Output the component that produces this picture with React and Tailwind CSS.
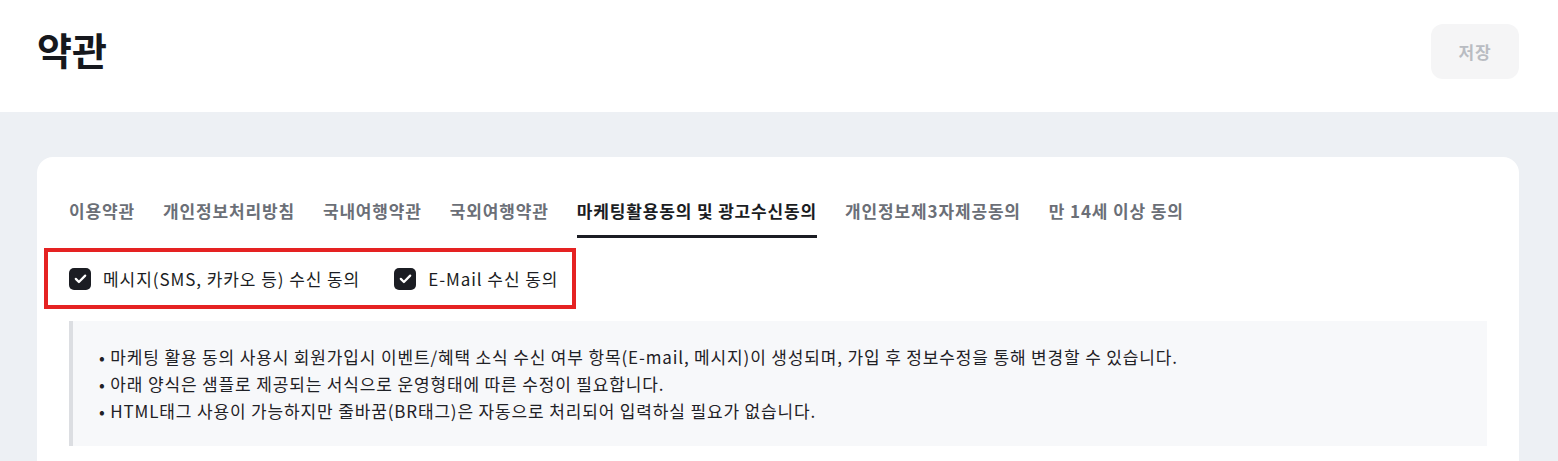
import React, { useState } from 'react';

const tabs = [
  '이용약관',
  '개인정보처리방침',
  '국내여행약관',
  '국외여행약관',
  '마케팅활용동의 및 광고수신동의',
  '개인정보제3자제공동의',
  '만 14세 이상 동의',
];

const notes = [
  '마케팅 활용 동의 사용시 회원가입시 이벤트/혜택 소식 수신 여부 항목(E-mail, 메시지)이 생성되며, 가입 후 정보수정을 통해 변경할 수 있습니다.',
  '아래 양식은 샘플로 제공되는 서식으로 운영형태에 따른 수정이 필요합니다.',
  'HTML태그 사용이 가능하지만 줄바꿈(BR태그)은 자동으로 처리되어 입력하실 필요가 없습니다.',
];

function Check({ checked, onClick, label }) {
  return (
    <button onClick={onClick} className="flex items-center gap-[12px]">
      <span
        className={
          checked
            ? 'flex h-[22px] w-[22px] items-center justify-center rounded-[5px] bg-[#1b1d23]'
            : 'flex h-[22px] w-[22px] items-center justify-center rounded-[5px] border-2 border-[#c9ccd1] bg-white'
        }
      >
        {checked && (
          <svg viewBox="0 0 16 16" className="h-[15px] w-[15px]" fill="none">
            <path d="M3 8.4l3.3 3.3L13 4.9" stroke="#fff" strokeWidth="2.4" strokeLinecap="round" strokeLinejoin="round" />
          </svg>
        )}
      </span>
      <span className="text-[17px] tracking-[0.055em] text-[#1b1d23]">{label}</span>
    </button>
  );
}

export default function App() {
  const [active, setActive] = useState(4);
  const [sms, setSms] = useState(true);
  const [mail, setMail] = useState(true);

  return (
    <div className="min-h-[461px] bg-[#edf0f4] font-['Noto_Sans_CJK_KR','Noto_Sans',sans-serif]">
      {/* HEADER */}
      <div className="flex h-[112px] items-start justify-between bg-white pl-[37px] pr-[39px]">
        <h1 className="mt-[23px] text-[38px] font-bold leading-[52px] text-[#16181d]">약관</h1>
        <button className="mt-[24px] h-[55px] w-[88px] rounded-xl bg-[#f5f5f6] text-[17px] font-bold tracking-[0.045em] text-[#b9bcc2]">
          저장
        </button>
      </div>

      {/* CARD */}
      <div className="pl-[37px] pr-[39px] pt-[45px]">
        <div className="rounded-t-2xl bg-white px-[32px] pt-[42px] pb-6">
          {/* TABS */}
          <div className="flex gap-[28px]">
            {tabs.map((t, i) => (
              <button
                key={t}
                onClick={() => setActive(i)}
                className={
                  i === active
                    ? 'border-b-[3px] border-[#1b1d23] pb-[12px] text-[17px] font-bold leading-6 tracking-[0.05em] text-[#1b1d23]'
                    : 'border-b-[3px] border-transparent pb-[12px] text-[17px] font-bold leading-6 tracking-[0.05em] text-[#6b6f77]'
                }
              >
                {t}
              </button>
            ))}
          </div>

          {/* CHECKBOXES (highlighted) */}
          <div className="-ml-[25px] mt-[10px] inline-flex h-[61px] items-center gap-[34px] border-4 border-[#e52222] pl-[21px] pr-[14px]">
            <Check checked={sms} onClick={() => setSms(!sms)} label="메시지(SMS, 카카오 등) 수신 동의" />
            <Check checked={mail} onClick={() => setMail(!mail)} label="E-Mail 수신 동의" />
          </div>

          {/* INFO BOX */}
          <div className="mt-[12px] border-l-4 border-[#dcdee2] bg-[#f7f8fa] py-[22px] pl-[26px] pr-6">
            {notes.map((n) => (
              <p key={n} className="text-[17px] leading-[27px] tracking-[0.05em] text-[#1f2126]">
                • {n}
              </p>
            ))}
          </div>
        </div>
      </div>
    </div>
  );
}
